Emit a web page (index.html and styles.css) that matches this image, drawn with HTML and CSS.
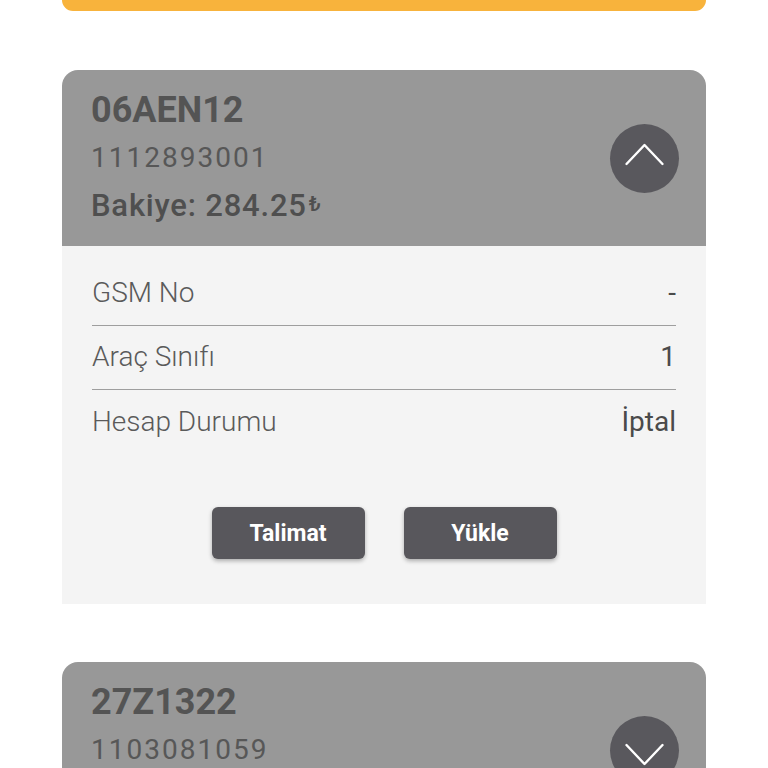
FILE: index.html
```html
<!DOCTYPE html>
<html lang="tr">
<head>
<meta charset="utf-8">
<link rel="stylesheet" href="styles.css">
</head>
<body>
<div class="page">
  <div class="topbar"></div>

  <div class="card">
    <div class="card-head">
      <div class="head-text">
        <div class="plate">06AEN12</div>
        <div class="number">1112893001</div>
        <div class="balance">Bakiye: 284.25<span class="tl">₺</span></div>
      </div>
      <div class="toggle">
        <svg width="69" height="69" viewBox="0 0 69 69"><polyline points="16.5,40 34.5,21 52.5,40" fill="none" stroke="#fff" stroke-width="2.4" stroke-linecap="round" stroke-linejoin="round"/></svg>
      </div>
    </div>
    <div class="card-body">
      <div class="row"><span class="label">GSM No</span><span class="value">-</span></div>
      <div class="row"><span class="label">Araç Sınıfı</span><span class="value">1</span></div>
      <div class="row last"><span class="label">Hesap Durumu</span><span class="value">İptal</span></div>
      <div class="actions">
        <button class="btn">Talimat</button>
        <button class="btn">Yükle</button>
      </div>
    </div>
  </div>

  <div class="card">
    <div class="card-head">
      <div class="head-text">
        <div class="plate">27Z1322</div>
        <div class="number">1103081059</div>
      </div>
      <div class="toggle">
        <svg width="69" height="69" viewBox="0 0 69 69"><polyline points="16.5,29 34.5,48 52.5,29" fill="none" stroke="#fff" stroke-width="2.4" stroke-linecap="round" stroke-linejoin="round"/></svg>
      </div>
    </div>
  </div>
</div>
</body>
</html>
```

FILE: styles.css
```css
* { box-sizing: border-box; }
html, body { margin: 0; padding: 0; background: #ffffff; }
body { font-family: Roboto, "Noto Sans", sans-serif; overflow: hidden; height: 768px; }

.page {
  width: 644px;
  margin-left: 62px;
  display: flex;
  flex-direction: column;
}

.topbar {
  height: 11px;
  background: #f8b33c;
  border-radius: 0 0 12px 12px;
  margin-bottom: 59px;
}

.card { margin-bottom: 58px; }

.card-head {
  height: 176px;
  background: #989898;
  border-radius: 16px 16px 0 0;
  padding: 16px 27px 16px 29px;
  display: flex;
  align-items: center;
  justify-content: space-between;
}

.head-text {
  display: flex;
  flex-direction: column;
  align-self: flex-start;
}

.plate {
  font-size: 36px;
  font-weight: 700;
  line-height: 48px;
  color: #545454;
}

.number {
  font-size: 28px;
  font-weight: 400;
  line-height: 44px;
  margin-top: 2px;
  letter-spacing: 2px;
  color: #575757;
}

.balance {
  font-size: 31px;
  font-weight: 500;
  line-height: 48px;
  letter-spacing: 0.8px;
  color: #4f4f4f;
}

.tl { font-size: 21px; margin-left: 2px; vertical-align: 5px; }

.toggle {
  width: 69px;
  height: 69px;
  border-radius: 50%;
  background: #59585d;
  display: flex;
}

.card-body {
  background: #f4f4f4;
  padding: 16px 30px 45px 30px;
}

.row {
  height: 64px;
  border-bottom: 1px solid #9e9e9e;
  display: flex;
  align-items: center;
  justify-content: space-between;
  padding-bottom: 2px;
}
.row.last { border-bottom: none; }

.label {
  font-size: 28px;
  font-weight: 300;
  color: #5a5a5a;
}
.value {
  font-size: 28px;
  font-weight: 400;
  color: #4a4a4a;
}

.actions {
  margin-top: 53px;
  display: flex;
  justify-content: center;
  gap: 39px;
}

.btn {
  width: 153px;
  height: 52px;
  border: none;
  border-radius: 6px;
  background: #58575c;
  color: #ffffff;
  font-family: Roboto, "Noto Sans", sans-serif;
  font-size: 23px;
  font-weight: 700;
  box-shadow: 0 2px 4px rgba(0,0,0,0.3);
  padding: 0;
}
```
